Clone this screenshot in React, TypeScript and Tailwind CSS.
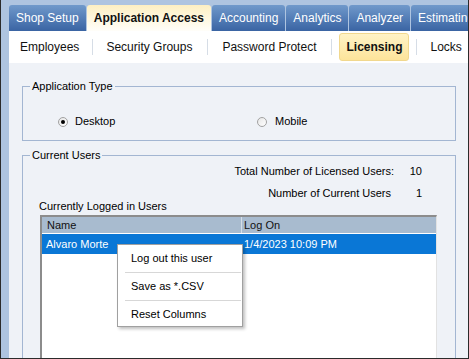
const tabs = ["Shop Setup", "Application Access", "Accounting", "Analytics", "Analyzer", "Estimating"];
const subTabs = ["Employees", "Security Groups", "Password Protect", "Licensing", "Locks"];

function Radio({ checked }: { checked?: boolean }) {
  return (
    <span className="flex h-[10px] w-[10px] items-center justify-center rounded-full border border-[#a2a2a2] bg-linear-to-br from-[#e6e6e6] to-white">
      {checked && <span className="h-[4px] w-[4px] rounded-full bg-black" />}
    </span>
  );
}

function ContextMenu() {
  return (
    <div className="absolute left-[116px] top-[244px] w-[126px] border border-[#a0a0a0] bg-white pt-[2px] pb-[1px] text-[11px] text-black shadow-[2px_2px_3px_rgba(0,0,0,0.25)]">
      <div className="flex h-[22px] items-center pl-[13px]">Log out this user</div>
      <div className="flex h-[6px] items-center pl-[7px] pr-[1px]">
        <div className="h-px w-full bg-[#d7d7d7]" />
      </div>
      <div className="flex h-[22px] items-center pl-[13px]">Save as *.CSV</div>
      <div className="flex h-[6px] items-center pl-[7px] pr-[1px]">
        <div className="h-px w-full bg-[#d7d7d7]" />
      </div>
      <div className="flex h-[22px] items-center pl-[13px]">Reset Columns</div>
    </div>
  );
}

export default function App() {
  return (
    <div className="relative flex h-[359px] w-[469px] flex-col overflow-hidden border-x border-b border-[#2b2b2b] bg-[#aec4e0] font-['Liberation_Sans',Arial,sans-serif] text-black">
      {/* main tabs */}
      <div className="flex h-[31px] shrink-0 items-end gap-px pl-[8px]">
        {tabs.map((t) => (
          <div
            key={t}
            className={
              t === "Application Access"
                ? "flex h-[26px] shrink-0 items-center rounded-t-[3px] bg-linear-to-b from-[#fdefc2] to-[#fffef9] px-[7px] text-[12px] font-bold text-[#111]"
                : "flex h-[26px] shrink-0 items-center rounded-t-[3px] bg-linear-to-b from-[#7099cb] to-[#3a64a3] px-[7px] text-[12px] text-white"
            }
          >
            {t}
          </div>
        ))}
      </div>

      {/* sub tabs */}
      <div className="ml-[8px] flex h-[32px] shrink-0 items-center bg-white pl-[11px] text-[12px] text-[#111]">
        {subTabs.map((s, i) => (
          <div key={s} className="flex items-center">
            {i > 0 && (
              <span
                className={
                  s === "Licensing"
                    ? "mr-[7px] ml-[15px] h-[16px] w-px bg-[#d6dde6]"
                    : s === "Locks"
                      ? "mr-[13px] ml-[7px] h-[16px] w-px bg-[#d6dde6]"
                      : s === "Password Protect"
                        ? "mr-[14px] ml-[15px] h-[16px] w-px bg-[#d6dde6]"
                        : "mx-[13px] h-[16px] w-px bg-[#d6dde6]"
                }
              />
            )}
            {s === "Licensing" ? (
              <span className="flex h-[28px] items-center rounded-[3px] border border-[#f1d88e] bg-linear-to-b from-[#fff3c6] to-[#fde49a] px-[6px] font-bold">
                {s}
              </span>
            ) : (
              <span>{s}</span>
            )}
          </div>
        ))}
      </div>

      {/* body */}
      <div className="ml-[8px] flex flex-1 flex-col bg-[#eff2f7] pr-[12px] pl-[13px] pt-[17px] text-[11px] leading-[13px]">
        <fieldset className="border border-[#a3b6d2] pb-[12px]">
          <legend className="ml-[7px] px-[2px]">Application Type</legend>
          <div className="mt-[22px] flex items-center pl-[35px]">
            <div className="flex w-[199px] items-center gap-[7px]">
              <Radio checked />
              <span>Desktop</span>
            </div>
            <div className="flex items-center gap-[8px]">
              <Radio />
              <span>Mobile</span>
            </div>
          </div>
        </fieldset>

        <fieldset className="mt-[8px] flex-1 border border-[#a3b6d2]">
          <legend className="ml-[7px] px-[2px]">Current Users</legend>
          <div className="mt-[3px] grid grid-cols-[1fr_28px] gap-y-[9px] pr-[33px]">
            <span className="text-right">Total Number of Licensed Users:</span>
            <span className="text-right">10</span>
            <span className="pr-[3px] text-right">Number of Current Users</span>
            <span className="text-right">1</span>
          </div>
          <div className="pl-[16px]">Currently Logged in Users</div>
          <div className="mt-[2px] ml-[17px] h-[200px] w-[397px] border-t-2 border-l-2 border-[#8c8c8c] border-r border-b border-r-[#e2e2e2] border-b-[#e2e2e2] bg-white">
            <div className="flex h-[16px] items-center bg-[#a8bbcf] text-[#111]">
              <span className="w-[199px] pl-[5px]">Name</span>
              <span className="flex h-full items-center border-l border-[#d5dee8] pl-[2px]">Log On</span>
            </div>
            <div className="mt-px flex h-[20px] items-center bg-[#0a77d6] text-white">
              <span className="w-[199px] pl-[4px]">Alvaro Morte</span>
              <span className="pl-[3px]">1/4/2023 10:09 PM</span>
            </div>
          </div>
        </fieldset>
      </div>

      <ContextMenu />
    </div>
  );
}
